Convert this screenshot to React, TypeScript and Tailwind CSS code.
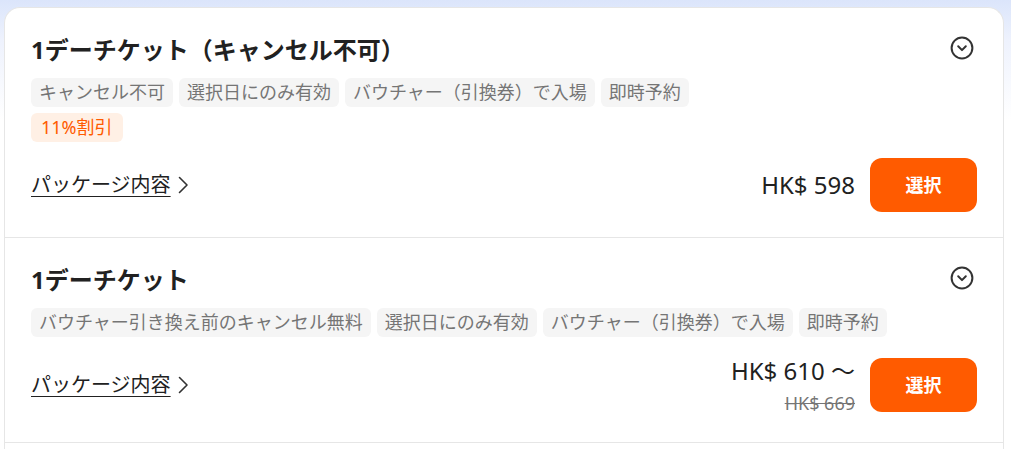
import React from "react";

const font = { fontFamily: '"Noto Sans", "Noto Sans CJK JP", sans-serif' };

function ChevronCircle() {
  return (
    <svg width="24" height="24" viewBox="0 0 24 24" fill="none" className="mt-[2px] mr-[3px] shrink-0">
      <circle cx="12" cy="12" r="10.4" stroke="#333333" strokeWidth="2" />
      <path d="M8.2 10.3 L12 14.1 L15.8 10.3" stroke="#333333" strokeWidth="2" strokeLinecap="round" strokeLinejoin="round" />
    </svg>
  );
}

function ChevronRight() {
  return (
    <svg width="14" height="18" viewBox="0 0 14 18" fill="none" className="ml-[5px]">
      <path d="M3.5 1.5 L11 9 L3.5 16.5" stroke="#333333" strokeWidth="1.6" strokeLinecap="round" strokeLinejoin="round" />
    </svg>
  );
}

function Tag({ children, discount }: { children: React.ReactNode; discount?: boolean }) {
  return (
    <span
      className={
        discount
          ? "h-[29px] px-[10px] rounded-[6px] bg-[#fff0e5] text-[#ff5b00] text-[18px] leading-[29px] whitespace-nowrap"
          : "h-[29px] px-[8px] rounded-[6px] bg-[#f5f5f5] text-[#757575] text-[18px] leading-[29px] whitespace-nowrap"
      }
    >
      {children}
    </span>
  );
}

function Card({
  title,
  tags,
  discount,
  price,
  oldPrice,
}: {
  title: string;
  tags: string[];
  discount?: string;
  price: string;
  oldPrice?: string;
}) {
  return (
    <div className="px-[26px] pt-[26px] pb-[25px] border-b border-[#e6e6e6]">
      <div className="flex items-start justify-between">
        <h2 className="text-[24px] leading-[32px] font-bold text-[#212121]">{title}</h2>
        <ChevronCircle />
      </div>
      <div className="mt-[12px] flex flex-wrap gap-[6px]">
        {tags.map((t) => (
          <Tag key={t}>{t}</Tag>
        ))}
      </div>
      {discount && (
        <div className="mt-[6px] flex">
          <Tag discount>{discount}</Tag>
        </div>
      )}
      <div className="mt-[16px] flex items-center justify-between">
        <a className="flex items-center text-[20px] leading-[28px] text-[#212121] cursor-pointer">
          <span className="underline underline-offset-[4px] decoration-[1px]">パッケージ内容</span>
          <ChevronRight />
        </a>
        <div className="flex items-center gap-[15px]">
          <div className="flex flex-col items-end">
            <span className="text-[24px] leading-[36px] font-normal text-[#212121]">{price}</span>
            {oldPrice && (
              <span className="text-[18px] leading-[28px] text-[#757575] line-through">{oldPrice}</span>
            )}
          </div>
          <button className="w-[107px] h-[54px] rounded-[12px] bg-[#ff5b00] text-white text-[18px] font-bold">
            選択
          </button>
        </div>
      </div>
    </div>
  );
}

export default function App() {
  return (
    <div
      style={font}
      className="w-[1011px] h-[449px] overflow-hidden bg-[linear-gradient(to_bottom,#dbe5fb_0px,#eef2fd_40px,#ffffff_120px)] pl-[4px] pr-[7px] pt-[7px]"
    >
      <div className="bg-white rounded-t-[16px] border-x border-t border-[#e6e6e6] h-full">
        <Card
          title="1デーチケット（キャンセル不可）"
          tags={["キャンセル不可", "選択日にのみ有効", "バウチャー（引換券）で入場", "即時予約"]}
          discount="11%割引"
          price="HK$ 598"
        />
        <Card
          title="1デーチケット"
          tags={["バウチャー引き換え前のキャンセル無料", "選択日にのみ有効", "バウチャー（引換券）で入場", "即時予約"]}
          price="HK$ 610 ～"
          oldPrice="HK$ 669"
        />
      </div>
    </div>
  );
}
